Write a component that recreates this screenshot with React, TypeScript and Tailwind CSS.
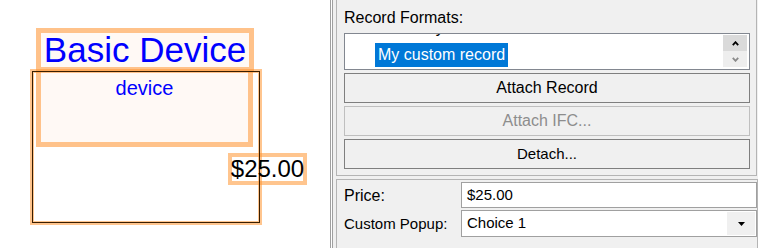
import React from 'react';

// ---------------------------------------------------------------------------
// Layout canvas (left) — items placed at their design coordinates
// ---------------------------------------------------------------------------

function LayoutCanvas() {
  return (
    <div className="relative h-[248px] w-[330px] shrink-0 overflow-hidden bg-white">
      {/* Title box */}
      <div className="absolute left-[36px] top-[28px] h-[44px] w-[218px] border-[5px] border-[rgba(255,150,50,0.55)] bg-[#fff9f5]" />
      {/* Subtitle box */}
      <div className="absolute left-[36px] top-[67px] h-[80px] w-[217px] border-[5px] border-[rgba(255,150,50,0.55)] bg-[#fff9f5]" />
      {/* Price box */}
      <div className="absolute left-[228px] top-[153px] h-[32px] w-[79px] border-[4px] border-[rgba(255,150,50,0.55)] bg-white" />
      {/* Device frame */}
      <div className="absolute left-[30px] top-[69px] h-[156px] w-[232px] border-[4px] border-[rgba(255,150,50,0.55)]" />
      <div className="absolute left-[32px] top-[71px] h-[152px] w-[228px] border border-[#3a1e00]" />

      <div className="absolute left-[36px] top-[32px] w-[218px] text-center text-[35px] leading-none text-[#0000ff]">
        Basic Device
      </div>
      <div className="absolute left-[36px] top-[78px] w-[217px] text-center text-[20px] leading-none text-[#0000ff]">
        device
      </div>
      <div className="absolute left-[228px] top-[157px] w-[79px] text-center text-[24px] leading-none text-black">
        $25.00
      </div>
    </div>
  );
}

// ---------------------------------------------------------------------------
// Inspector panel (right)
// ---------------------------------------------------------------------------

function Chevron({ up, color }: { up?: boolean; color: string }) {
  return (
    <svg width="7" height="5" viewBox="0 0 7 5">
      <polyline
        points={up ? '0.8,4.2 3.5,1.2 6.2,4.2' : '0.8,0.8 3.5,3.8 6.2,0.8'}
        fill="none"
        stroke={color}
        strokeWidth="1.8"
      />
    </svg>
  );
}

function PanelButton({ label, disabled }: { label: string; disabled?: boolean }) {
  return (
    <div
      className={`flex h-[30px] w-[406px] items-center justify-center border bg-[#f0f0f0] ${
        disabled ? 'border-[#bfbfbf] text-[#8d8d8d]' : 'border-[#7f7f7f] text-black'
      }`}
    >
      {label}
    </div>
  );
}

function Inspector() {
  return (
    <div className="h-[248px] flex-1 border-l border-[#a0a0a0] bg-white">
      <div className="ml-px h-full border-l border-[#a0a0a0] bg-[#f0f0f0]">
        {/* Record formats group */}
        <div className="ml-[3px] h-[176px] w-[421px] border-x border-b border-[#b4b4b4] pl-[7px] pt-[9px]">
          <div className="h-[18px] text-[16px] leading-[18px]">Record Formats:</div>
          <div className="mt-[6px] flex h-[37px] w-[406px] border border-[#828790] bg-white">
            <div className="flex-1 overflow-hidden">
              <div className="-mt-[18px] pl-[30px] text-[16px]">
                <div className="h-[27px] px-[3px] leading-[24px]">Inventory</div>
                <div className="inline-block h-[24px] bg-[#0078d7] px-[3px] leading-[24px] text-white">
                  My custom record
                </div>
              </div>
            </div>
            <div className="mr-[2px] mt-px flex w-[24px] flex-col">
              <div className="flex h-[16px] items-center justify-center bg-[#dadada]">
                <Chevron up color="#000" />
              </div>
              <div className="flex h-[16px] items-center justify-center bg-[#eeeeee]">
                <Chevron color="#8a8a8a" />
              </div>
            </div>
          </div>
          <div className="mt-[3px] flex flex-col gap-[3px] text-[16px]">
            <PanelButton label="Attach Record" />
            <PanelButton label="Attach IFC..." disabled />
            <div className="text-[15px]">
              <PanelButton label="Detach..." />
            </div>
          </div>
        </div>

        {/* Properties group */}
        <div className="ml-[3px] mt-[3px] h-[72px] w-[422px] border-x border-t border-[#b4b4b4] pl-[7px] pt-[2px] text-[15px]">
          <div className="flex h-[26px] items-center">
            <span className="w-[117px] pt-px text-[16px]">Price:</span>
            <div className="flex h-[26px] w-[296px] items-center border border-[#a0a0a0] bg-white pl-[5px]">
              $25.00
            </div>
          </div>
          <div className="mt-[2px] flex h-[27px] items-center">
            <span className="w-[117px] pt-px">Custom Popup:</span>
            <div className="flex h-[27px] w-[296px] items-center border border-[#a0a0a0] bg-white pl-[5px]">
              <span className="flex-1">Choice 1</span>
              <div className="mr-px flex h-[23px] w-[28px] items-center justify-center bg-[#f0f0f0]">
                <svg width="7" height="4" viewBox="0 0 7 4">
                  <polygon points="0,0 7,0 3.5,4" fill="#000" />
                </svg>
              </div>
            </div>
          </div>
        </div>
      </div>
    </div>
  );
}

export default function App() {
  return (
    <div className="flex h-[248px] w-[758px] overflow-hidden font-['Liberation_Sans',Arial,sans-serif] text-black">
      <LayoutCanvas />
      <Inspector />
    </div>
  );
}
